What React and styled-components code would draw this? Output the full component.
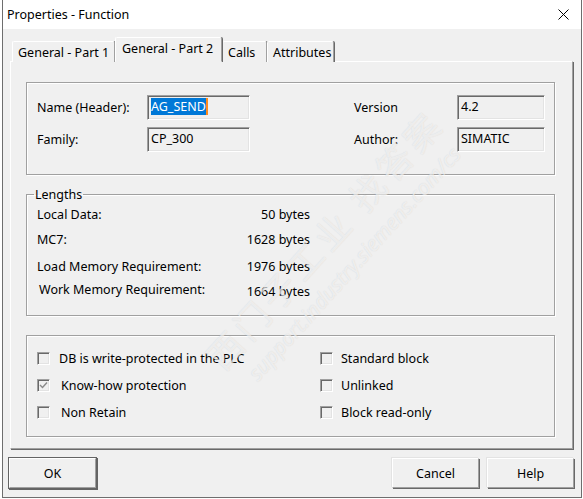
import React from "react";
import styled, { createGlobalStyle } from "styled-components";

const Global = createGlobalStyle`
  html, body { margin: 0; padding: 0; background: #ffffff; }
  body { font-family: "Noto Sans", "Liberation Sans", sans-serif; font-size: 12.5px; color: #000; }
  * { box-sizing: border-box; }
`;

const Window = styled.div`
  position: relative;
  margin-left: 2px;
  width: 580px;
  height: 498px;
  border-left: 1px solid #6e6e6e;
  border-right: 1px solid #6e6e6e;
  border-bottom: 1px solid #6e6e6e;
  background: #f0f0f0;
  display: flex;
  flex-direction: column;
  overflow: hidden;
`;

const TitleBar = styled.div`
  height: 29px;
  background: #ffffff;
  display: flex;
  align-items: center;
  justify-content: space-between;
  padding: 0 12px 0 4px;
`;

const Title = styled.span`
  font-size: 12.5px;
  color: #000;
`;

const Body = styled.div`
  flex: 1;
  display: flex;
  flex-direction: column;
  padding: 8px 7px 0 7px;
`;

const TabRow = styled.div`
  display: flex;
  align-items: flex-end;
  height: 25px;
  padding-left: 2px;
  position: relative;
  z-index: 2;
  margin-bottom: -1px;
`;

const Tab = styled.div`
  width: ${(p) => p.w}px;
  height: ${(p) => (p.active ? 25 : 21)}px;
  background: #f0f0f0;
  border-top: 1px solid #ffffff;
  border-left: 1px solid #ffffff;
  border-right: 1px solid #a0a0a0;
  box-shadow: 1px 0 0 #696969;
  border-radius: 2px 2px 0 0;
  display: flex;
  align-items: center;
  padding-left: ${(p) => (p.active ? 6 : 5)}px;
  padding-bottom: ${(p) => (p.active ? 3 : 0)}px;
  font-size: 12.5px;
  white-space: nowrap;
  position: relative;
  z-index: ${(p) => (p.active ? 3 : 1)};
  ${(p) => (p.active ? "border-bottom: 1px solid #f0f0f0;" : "")}
`;

const Panel = styled.div`
  width: 563px;
  height: 388px;
  border-top: 1px solid #ffffff;
  border-left: 1px solid #ffffff;
  border-right: 1px solid #a0a0a0;
  border-bottom: 1px solid #a0a0a0;
  box-shadow: 1px 1px 0 #696969;
  display: flex;
  flex-direction: column;
  padding: 20px 17px 0 15px;
  gap: 19px;
  position: relative;
  z-index: 1;
`;

const Group = styled.div`
  height: ${(p) => p.h}px;
  border: 1px solid #a0a0a0;
  box-shadow: 1px 1px 0 #ffffff, inset 1px 1px 0 #ffffff;
`;

const HeaderGrid = styled(Group)`
  display: grid;
  grid-template-columns: 110px 103px 1fr 103px 88px;
  grid-auto-rows: 25px;
  row-gap: 7px;
  padding: 12px 9px 0 10px;
  align-items: center;
`;

const Label = styled.span`
  font-size: 12.5px;
  white-space: nowrap;
`;

const Field = styled.div`
  height: 25px;
  border-top: 1px solid #a0a0a0;
  border-left: 1px solid #a0a0a0;
  border-right: 1px solid #ffffff;
  border-bottom: 1px solid #ffffff;
  box-shadow: inset 1px 1px 0 #696969, inset -1px -1px 0 #e3e3e3;
  background: #f0f0f0;
  padding: 2px 0 0 3px;
  font-size: 12.5px;
  line-height: 18px;
  white-space: nowrap;
`;

const Selected = styled.span`
  background: #0078d7;
  color: #ffffff;
  border-right: 2px solid #ff8a1c;
`;

const Fieldset = styled.fieldset`
  margin: 0;
  height: 130px;
  margin-top: -8px;
  border: 1px solid #a0a0a0;
  box-shadow: 1px 1px 0 #ffffff, inset 1px 1px 0 #ffffff;
  padding: 0 0 0 10px;
  display: flex;
  flex-direction: column;
`;

const Legend = styled.legend`
  margin-left: -3px;
  padding: 0 1px;
  font-size: 12.5px;
  line-height: 17px;
`;

const LengthRow = styled.div`
  width: 273px;
  height: 20px;
  margin-top: ${(p) => p.mt}px;
  display: flex;
  justify-content: space-between;
  align-items: center;
  font-size: 12.5px;
`;

const LengthLabel = styled.span`
  padding-left: ${(p) => p.shift || 0}px;
  white-space: nowrap;
`;

const LengthValue = styled.span`
  position: relative;
  top: ${(p) => p.drop || 0}px;
  white-space: nowrap;
`;

const OptionsGrid = styled(Group)`
  display: grid;
  grid-template-columns: 283px 1fr;
  grid-template-rows: 20px 20px 20px;
  row-gap: 7px;
  padding: 12px 0 0 10px;
`;

const Option = styled.div`
  display: flex;
  align-items: center;
  gap: ${(p) => p.gap || 8}px;
  font-size: 12.5px;
  white-space: nowrap;
`;

const Box = styled.span`
  width: 13px;
  height: 13px;
  flex: none;
  border-top: 1px solid #a0a0a0;
  border-left: 1px solid #a0a0a0;
  border-right: 1px solid #ffffff;
  border-bottom: 1px solid #ffffff;
  box-shadow: inset 1px 1px 0 #696969, inset -1px -1px 0 #e3e3e3;
  background: #f0f0f0;
  display: flex;
  align-items: center;
  justify-content: center;
`;

const ButtonRow = styled.div`
  display: flex;
  align-items: center;
  margin-top: 9px;
  margin-left: -1px;
  gap: 8px;
`;

const Button = styled.div`
  width: 87px;
  height: 30px;
  display: flex;
  align-items: center;
  justify-content: center;
  font-size: 12.5px;
  background: #f0f0f0;
  border-top: 1px solid #ffffff;
  border-left: 1px solid #ffffff;
  border-right: 1px solid #a0a0a0;
  border-bottom: 1px solid #a0a0a0;
  box-shadow: ${(p) =>
    p.primary
      ? "0 0 0 1px #646464, 1px 1px 0 1px #646464"
      : "1px 1px 0 #696969, -1px -1px 0 #e3e3e3"};
  margin-left: ${(p) => (p.push ? "auto" : "0")};
`;

const Spacer = styled.span``;

const Watermark = styled.div`
  position: absolute;
  left: 190px;
  top: 345px;
  transform: rotate(-48deg);
  transform-origin: left top;
  pointer-events: none;
  z-index: 10;
  display: flex;
  flex-direction: column;
  color: rgba(255, 255, 255, 0.6);
  text-shadow: 0 0 1px rgba(140, 140, 140, 0.3);
  white-space: nowrap;
`;

const WmBig = styled.span`
  font-family: "Noto Sans CJK SC", sans-serif;
  font-size: 35px;
  letter-spacing: 5px;
`;

const WmSmall = styled.span`
  font-family: "Noto Sans", sans-serif;
  font-size: 21px;
  font-style: italic;
  padding-left: 16px;
`;

const CloseIcon = () => (
  <svg width="11" height="11" viewBox="0 0 11 11">
    <path d="M0.5 0.5 L10.5 10.5 M10.5 0.5 L0.5 10.5" stroke="#000" strokeWidth="1" />
  </svg>
);

const Check = () => (
  <svg width="9" height="9" viewBox="0 0 9 9">
    <path d="M1 4 L3.5 6.5 L8 1.5" stroke="#8a8a8a" strokeWidth="1.4" fill="none" />
  </svg>
);

export default function App() {
  return (
    <>
      <Global />
      <Window>
        <TitleBar>
          <Title>Properties - Function</Title>
          <CloseIcon />
        </TitleBar>
        <Body>
          <TabRow>
            <Tab w={103}>General - Part 1</Tab>
            <Tab w={107} active>General - Part 2</Tab>
            <Tab w={45}>Calls</Tab>
            <Tab w={67}>Attributes</Tab>
          </TabRow>
          <Panel>
            <HeaderGrid h={93}>
              <Label>Name (Header):</Label>
              <Field><Selected>AG_SEND</Selected></Field>
              <Spacer />
              <Label>Version</Label>
              <Field>4.2</Field>
              <Label>Family:</Label>
              <Field>CP_300</Field>
              <Spacer />
              <Label>Author:</Label>
              <Field>SIMATIC</Field>
            </HeaderGrid>
            <Fieldset>
              <Legend>Lengths</Legend>
              <LengthRow mt={1}>
                <LengthLabel>Local Data:</LengthLabel>
                <LengthValue>50 bytes</LengthValue>
              </LengthRow>
              <LengthRow mt={5}>
                <LengthLabel>MC7:</LengthLabel>
                <LengthValue>1628 bytes</LengthValue>
              </LengthRow>
              <LengthRow mt={7}>
                <LengthLabel>Load Memory Requirement:</LengthLabel>
                <LengthValue>1976 bytes</LengthValue>
              </LengthRow>
              <LengthRow mt={3}>
                <LengthLabel shift={2}>Work Memory Requirement:</LengthLabel>
                <LengthValue drop={2}>1664 bytes</LengthValue>
              </LengthRow>
            </Fieldset>
            <OptionsGrid h={102}>
              <Option gap={9}><Box />DB is write-protected in the PLC</Option>
              <Option><Box />Standard block</Option>
              <Option gap={11}><Box><Check /></Box>Know-how protection</Option>
              <Option><Box />Unlinked</Option>
              <Option gap={11}><Box />Non Retain</Option>
              <Option><Box />Block read-only</Option>
            </OptionsGrid>
          </Panel>
          <ButtonRow>
            <Button primary>OK</Button>
            <Button push>Cancel</Button>
            <Button>Help</Button>
          </ButtonRow>
        </Body>
        <Watermark>
          <WmBig>西门子工业 找答案</WmBig>
          <WmSmall>support.industry.siemens.com/cs</WmSmall>
        </Watermark>
      </Window>
    </>
  );
}
